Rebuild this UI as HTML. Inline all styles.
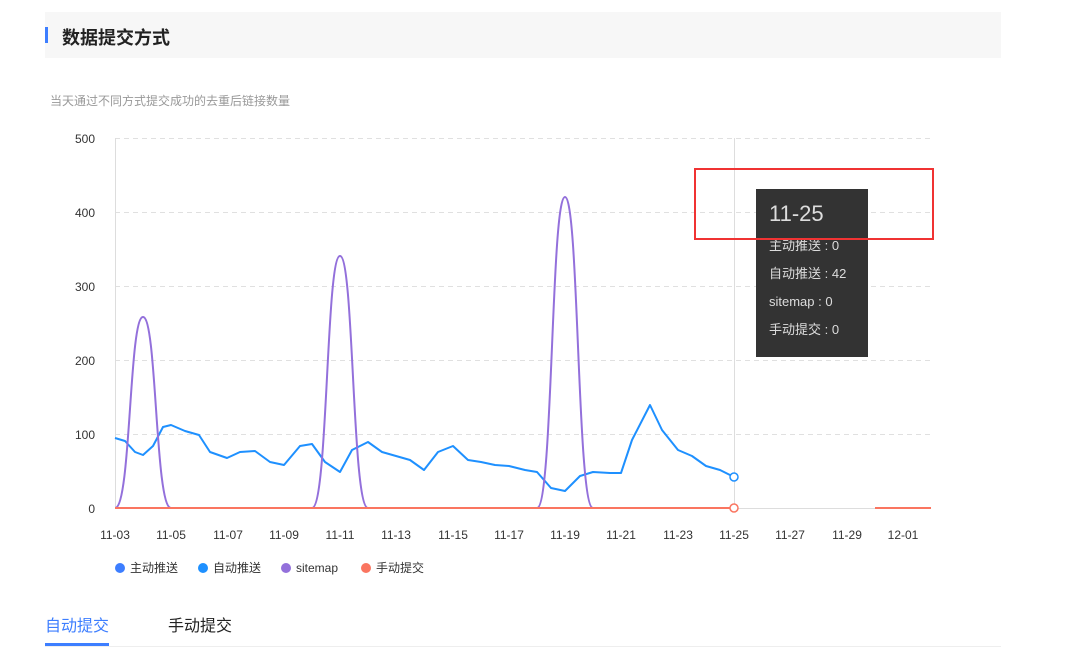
<!DOCTYPE html>
<html><head><meta charset="utf-8"><style>
body{margin:0;width:1075px;height:655px;background:#fff;font-family:"Liberation Sans","Noto Sans CJK SC",sans-serif;position:relative;overflow:hidden}
.hdr{position:absolute;left:45px;top:12px;width:956px;height:46px;background:#f7f7f7}
.bar{position:absolute;left:45px;top:27px;width:3px;height:16px;background:#3d7eff}
.title{position:absolute;left:62px;top:24px;font-size:18px;font-weight:bold;color:#222}
.sub{position:absolute;left:50px;top:92px;font-size:12px;color:#999}
.tip{position:absolute;left:756px;top:189px;width:112px;height:168px;background:#333;color:#ddd}
.red{position:absolute;left:694px;top:168px;width:236px;height:68px;border:2px solid #f03333}
.tab{position:absolute;top:612px;font-size:16px}
</style></head><body>
<div class="hdr"></div><div class="bar"></div>
<div class="title">数据提交方式</div>
<div class="sub">当天通过不同方式提交成功的去重后链接数量</div>
<svg width="1075" height="655" style="position:absolute;left:0;top:0" font-family="Liberation Sans, Noto Sans CJK SC, sans-serif">
<g stroke="#e0e0e0" stroke-dasharray="5,4">
<line x1="115" y1="138.5" x2="931" y2="138.5"/><line x1="115" y1="212.5" x2="931" y2="212.5"/><line x1="115" y1="286.5" x2="931" y2="286.5"/><line x1="115" y1="360.5" x2="931" y2="360.5"/><line x1="115" y1="434.5" x2="931" y2="434.5"/></g>
<line x1="115.5" y1="138" x2="115.5" y2="508" stroke="#ddd"/>
<line x1="115" y1="508.5" x2="931" y2="508.5" stroke="#ddd"/>
<line x1="734.5" y1="138" x2="734.5" y2="508" stroke="#ddd"/>
<g font-size="12" fill="#333" text-anchor="end"><text x="95" y="143">500</text><text x="95" y="217">400</text><text x="95" y="291">300</text><text x="95" y="365">200</text><text x="95" y="439">100</text><text x="95" y="513">0</text></g>
<g font-size="12" fill="#333" text-anchor="middle"><text x="115" y="539">11-03</text><text x="171" y="539">11-05</text><text x="228" y="539">11-07</text><text x="284" y="539">11-09</text><text x="340" y="539">11-11</text><text x="396" y="539">11-13</text><text x="453" y="539">11-15</text><text x="509" y="539">11-17</text><text x="565" y="539">11-19</text><text x="621" y="539">11-21</text><text x="678" y="539">11-23</text><text x="734" y="539">11-25</text><text x="790" y="539">11-27</text><text x="847" y="539">11-29</text><text x="903" y="539">12-01</text></g>
<polyline fill="none" stroke="#1e90ff" stroke-width="2" stroke-linejoin="round" points="115,438 125,441 135,452 143,455 153,446 163,427 171,425 185,431 199,435 210,452 227,458 240,452 255,451 270,462 284,465 300,446 312,444 325,462 340,472 352,450 368,442 382,452 396,456 410,460 424,470 438,452 453,446 468,460 481,462 495,465 509,466 525,470 537,472 551,488 565,491 580,476 593,472 610,473 621,473 632,440 650,405 662,430 678,450 692,456 706,466 720,470 734,477"/>
<path fill="none" stroke="#9370db" stroke-width="2" d="M115,508 C131,508 129,317 143,317 C157,317 155,508 171,508 M312,508 C328,508 326,256 340,256 C354,256 352,508 368,508 M537,508 C553,508 551,197 565,197 C579,197 577,508 593,508"/>
<line x1="115" y1="508" x2="734" y2="508" stroke="#fa7560" stroke-width="2"/>
<line x1="875" y1="508" x2="931" y2="508" stroke="#fa7560" stroke-width="2"/>
<circle cx="734" cy="477" r="4" fill="#fff" stroke="#1e90ff" stroke-width="1.5"/>
<circle cx="734" cy="508" r="4" fill="#fff" stroke="#fa7560" stroke-width="1.5"/>
<g font-size="12" fill="#333"><circle cx="120" cy="568" r="5" fill="#3d7eff"/><text x="130" y="572">主动推送</text><circle cx="203" cy="568" r="5" fill="#1e90ff"/><text x="213" y="572">自动推送</text><circle cx="286" cy="568" r="5" fill="#9370db"/><text x="296" y="572">sitemap</text><circle cx="366" cy="568" r="5" fill="#fa7560"/><text x="376" y="572">手动提交</text></g>
<line x1="45" y1="646.5" x2="1001" y2="646.5" stroke="#eee"/>
<rect x="45" y="643" width="64" height="3" fill="#3d7eff"/>
</svg>
<div class="tip"><div style="position:absolute;left:13px;top:12px;font-size:22px">11-25</div>
<div style="position:absolute;left:13px;top:43px;font-size:13px;line-height:28px">主动推送 : 0<br>自动推送 : 42<br>sitemap : 0<br>手动提交 : 0</div></div>
<div class="red"></div>
<div class="tab" style="left:45px;color:#3d7eff">自动提交</div>
<div class="tab" style="left:168px;color:#222">手动提交</div>
</body></html>
